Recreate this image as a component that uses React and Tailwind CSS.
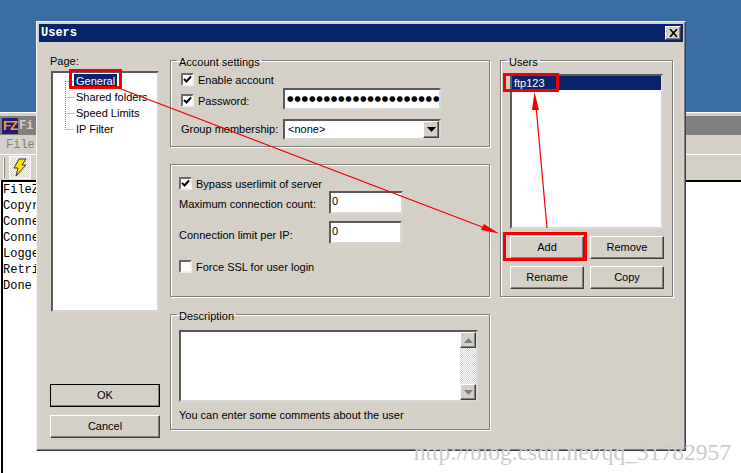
const uiFont = "font-['Liberation_Sans',sans-serif] text-[11px] text-black";
const raised = "bg-[#d4d0c8] border border-t-white border-l-white border-r-[#404040] border-b-[#404040] shadow-[inset_-1px_-1px_0_#808080]";
const sunken = "bg-white border-2 border-t-[#5a5a5a] border-l-[#5a5a5a] border-r-[#d8d8d8] border-b-[#d8d8d8]";
const etched = "border border-[#808080] shadow-[1px_1px_0_#fff,inset_1px_1px_0_#fff]";
const dither = "bg-[repeating-conic-gradient(#d4d0c8_0_25%,#ffffff_0_50%)] bg-[length:2px_2px]";
const logLines = ["FileZi", "Copyri", "Connec", "Connec", "Logged", "Retrie", "Done r"];
const pages = ["General", "Shared folders", "Speed Limits", "IP Filter"];

function Check({ checked = true, label, className = "" }) {
  return (
    <label className={`flex items-center gap-[4px] h-[13px] ${className}`}>
      <span className="w-[13px] h-[13px] bg-white border-2 border-t-[#6a6a6a] border-l-[#6a6a6a] border-r-[#eeeeee] border-b-[#eeeeee] flex items-center justify-center shrink-0">
        {checked && (
          <svg width="9" height="9" viewBox="0 0 9 9">
            <path d="M1 4l2.5 2.5L8 1.5" fill="none" stroke="#000" strokeWidth="2" />
          </svg>
        )}
      </span>
      <span className="pt-[2px]">{label}</span>
    </label>
  );
}

function Btn({ children, className = "" }) {
  return <div className={`h-[23px] flex items-center justify-center ${raised} ${className}`}>{children}</div>;
}

function Arrow({ up = false, color = "#000" }) {
  return (
    <svg width="9" height="5" viewBox="0 0 9 5">
      <path d={up ? "M4.5 0L9 5H0z" : "M0 0h9L4.5 5z"} fill={color} />
    </svg>
  );
}

function Group({ title, className = "", innerClassName = "", children }) {
  return (
    <fieldset className={`${etched} ${className}`}>
      <legend className="ml-[6px] px-[2px] pt-[4px] leading-[12px]">{title}</legend>
      <div className={innerClassName}>{children}</div>
    </fieldset>
  );
}

function BackgroundWindow() {
  return (
    <div className="flex-1 flex flex-col bg-white">
      <div className="h-[4px] bg-[#d4d0c8] border-t border-white" />
      <div className="h-[19px] bg-[#808080] flex items-center pl-[2px] gap-[1px]">
        <div className="w-[16px] h-[16px] bg-[#2b1a7a] flex items-center justify-center font-['Liberation_Sans',sans-serif] font-bold text-[13px] leading-none text-[#f7a11a] tracking-[-1px]">FZ</div>
        <span className="font-['Liberation_Mono',monospace] font-bold text-[12px] text-[#d4d0c8]">Fi</span>
      </div>
      <div className="h-[20px] bg-[#d4d0c8] border-b border-white pl-[6px] flex items-center font-['Liberation_Mono',monospace] text-[12px] text-[#808080]">File</div>
      <div className="h-[25px] bg-[#d4d0c8] flex items-center pl-[3px] gap-[4px]">
        <div className="w-[2px] h-[20px] bg-white border-r border-[#808080]" />
        <div className={`w-[22px] h-[23px] border border-white flex items-center justify-center ${dither}`}>
          <svg width="14" height="20" viewBox="0 0 14 20">
            <path d="M6 1h7L9 7h4L3 18l2-8H1z" fill="#ffe600" stroke="#333" strokeWidth="1" />
          </svg>
        </div>
      </div>
      <div className="flex-1 ml-[1px] border-l-2 border-t-2 border-black font-['Liberation_Mono',monospace] text-[12px] leading-[16px] text-black">
        {logLines.map((line, i) => (
          <div key={i}>{line}</div>
        ))}
      </div>
    </div>
  );
}

function PageTree() {
  return (
    <div className={`mt-[3px] ml-[1px] w-[108px] h-[241px] pl-[12px] ${sunken}`}>
      {pages.map((item, i) => (
        <div key={item} className="h-[16px] flex items-center">
          <svg width="9" height="16" viewBox="0 0 9 16" className="shrink-0">
            <path d={`M.5 ${i === 0 ? 8 : 0}V${i === pages.length - 1 ? 8 : 16}M.5 8.5H9`} stroke="#808080" strokeDasharray="1 1" fill="none" />
          </svg>
          <span className={`px-[2px] whitespace-nowrap leading-[15px] ${i === 0 ? "bg-[#0a246a] text-white" : ""}`}>{item}</span>
        </div>
      ))}
    </div>
  );
}

function UsersDialog() {
  return (
    <div className={`absolute left-[36px] top-[21px] w-[650px] h-[430px] bg-[#d4d0c8] p-[2px] border border-t-[#f4f4f4] border-l-[#f4f4f4] border-r-[#404040] border-b-[#404040] shadow-[inset_-1px_-1px_0_#808080] ${uiFont}`}>
      <div className="h-[18px] bg-[#0a246a] flex items-center justify-between pl-[2px] pr-[2px]">
        <span className="font-['Liberation_Mono',monospace] font-bold text-[12px] text-white">Users</span>
        <div className={`w-[16px] h-[14px] flex items-center justify-center ${raised}`}>
          <svg width="9" height="8" viewBox="0 0 9 8">
            <path d="M1 0l7 8M8 0L1 8" stroke="#000" strokeWidth="1.6" />
          </svg>
        </div>
      </div>

      <div className="flex gap-[10px] pl-[11px] pt-[10px]">
        <div className="w-[110px] h-[386px] flex flex-col">
          <div className="mt-[2px] leading-[14px]">Page:</div>
          <PageTree />
          <div className="mt-auto flex flex-col gap-[8px]">
            <Btn className="outline outline-1 outline-black -outline-offset-1">OK</Btn>
            <Btn>Cancel</Btn>
          </div>
        </div>

        <div className="w-[320px] flex flex-col">
          <Group title="Account settings" className="h-[95px]" innerClassName="pl-[10px]">
            <Check label="Enable account" className="mt-[5px]" />
            <div className="mt-[2px] h-[22px] flex items-center">
              <Check label="Password:" className="w-[102px] mt-[3px]" />
              <div className={`w-[158px] h-[22px] flex items-center pl-[2px] overflow-hidden whitespace-nowrap font-['DejaVu_Sans',sans-serif] text-[7.5px] tracking-[0.75px] leading-none ${sunken}`}>
                {"●".repeat(23)}
              </div>
            </div>
            <div className="mt-[9px] h-[21px] flex items-center">
              <span className="w-[102px] whitespace-nowrap">Group membership:</span>
              <div className={`w-[158px] h-[21px] flex items-center justify-between pl-[3px] ${sunken}`}>
                <span>&lt;none&gt;</span>
                <div className={`w-[16px] h-[17px] flex items-center justify-center ${raised}`}>
                  <Arrow />
                </div>
              </div>
            </div>
          </Group>

          <div className={`mt-[17px] h-[133px] pl-[8px] pt-[12px] ${etched}`}>
            <Check label="Bypass userlimit of server" />
            <div className="mt-[1px] h-[23px] flex items-center">
              <span className="w-[150px] pt-[3px]">Maximum connection count:</span>
              <div className={`w-[74px] h-[23px] pl-[1px] leading-[17px] ${sunken}`}>0</div>
            </div>
            <div className="mt-[7px] h-[23px] flex items-center">
              <span className="w-[150px] pt-[6px]">Connection limit per IP:</span>
              <div className={`w-[73px] h-[23px] pl-[1px] leading-[17px] ${sunken}`}>0</div>
            </div>
            <Check checked={false} label="Force SSL for user login" className="mt-[16px]" />
          </div>

          <Group title="Description" className="mt-[9px] h-[124px]" innerClassName="pl-[8px] pt-[8px]">
            <div className={`w-[299px] h-[72px] flex justify-end ${sunken}`}>
              <div className={`w-[16px] flex flex-col justify-between ${dither}`}>
                <div className={`h-[16px] flex items-center justify-center ${raised}`}><Arrow up color="#808080" /></div>
                <div className={`h-[16px] flex items-center justify-center ${raised}`}><Arrow color="#808080" /></div>
              </div>
            </div>
            <div className="mt-[6px] leading-[14px]">You can enter some comments about the user</div>
          </Group>
        </div>

        <Group title="Users" className="w-[173px] h-[245px]" innerClassName="pl-[9px] pt-[6px]">
          <div className={`w-[153px] h-[155px] ${sunken}`}>
            <div className="h-[14px] bg-[#0a246a] text-white pl-[2px] leading-[14px]">ftp123</div>
          </div>
          <div className="mt-[7px] grid grid-cols-[74px_74px] gap-x-[6px] gap-y-[7px]">
            <Btn>Add</Btn>
            <Btn>Remove</Btn>
            <Btn>Rename</Btn>
            <Btn>Copy</Btn>
          </div>
        </Group>
      </div>
    </div>
  );
}

function Annotations() {
  return (
    <svg className="absolute inset-0 pointer-events-none" width="741" height="473" viewBox="0 0 741 473">
      <g fill="none" stroke="#f00000" strokeWidth="3">
        <rect x="70.5" y="70.5" width="50" height="17" />
        <rect x="504.5" y="74.5" width="53" height="16" />
        <rect x="504.5" y="233.5" width="81" height="26" />
      </g>
      <path d="M121 89L490 230" stroke="#f00000" strokeWidth="1.2" />
      <path d="M499 233.5L481 230L484 224z" fill="#f00000" />
      <path d="M547 228L536 106" stroke="#f00000" strokeWidth="1.2" />
      <path d="M534.5 92L539 110L532 110z" fill="#f00000" />
    </svg>
  );
}

export default function App() {
  return (
    <div className="relative w-[741px] h-[473px] overflow-hidden bg-white flex flex-col">
      <div className="h-[112px] bg-[#3a6ea5] shrink-0" />
      <BackgroundWindow />
      <UsersDialog />
      <Annotations />
      <div className="absolute right-[10px] top-[439px] font-['Liberation_Serif',serif] text-[23.5px] leading-[26px] text-[#cccccc]">http://blog.csdn.net/qq_31782957</div>
    </div>
  );
}
